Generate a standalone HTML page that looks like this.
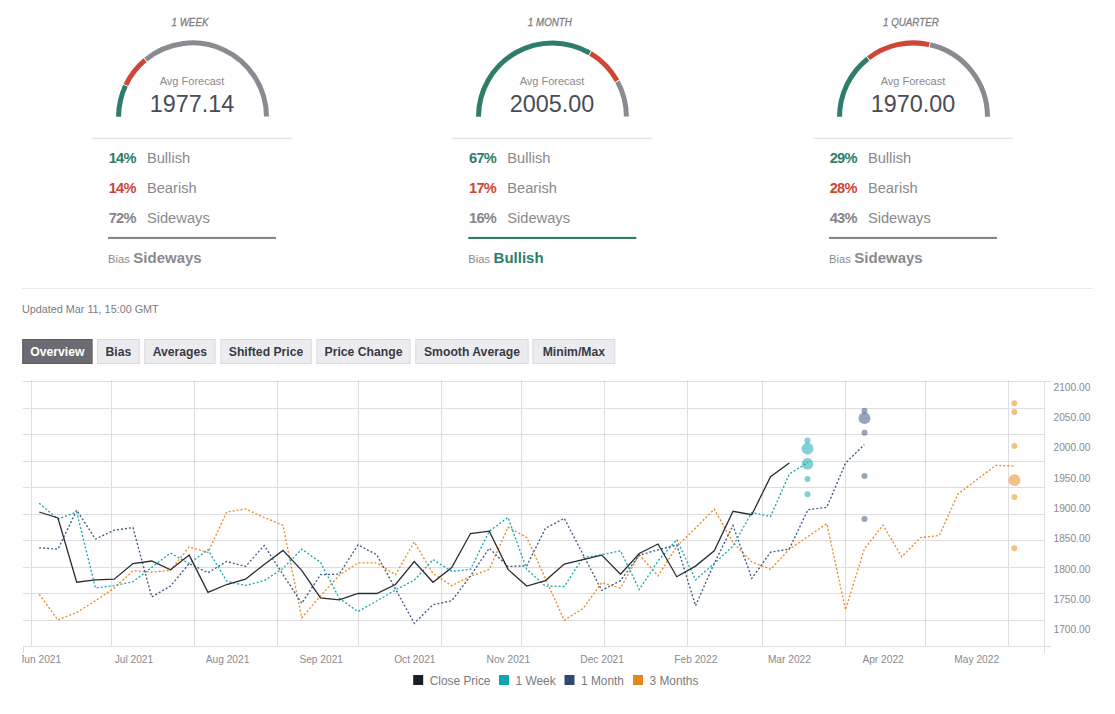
<!DOCTYPE html>
<html><head><meta charset="utf-8"><style>
html,body{margin:0;padding:0;background:#fff;}
body{width:1115px;height:714px;overflow:hidden;position:relative;font-family:"Liberation Sans", sans-serif;}
svg{position:absolute;left:0;top:0;}
text{font-family:"Liberation Sans", sans-serif;}
</style></head><body>
<svg width="1115" height="714" viewBox="0 0 1115 714">
<path d="M118.60,116.85 A73.95,73.95 0 0 1 125.45,85.77" fill="none" stroke="#2e7d6b" stroke-width="5"/>
<path d="M125.83,84.96 A73.95,73.95 0 0 1 145.07,60.16" fill="none" stroke="#cf4636" stroke-width="5"/>
<path d="M145.76,59.58 A73.95,73.95 0 0 1 266.50,116.40" fill="none" stroke="#8a8a90" stroke-width="5"/>
<text transform="translate(189.95,25.7) scale(0.89,1)" x="0" y="0" text-anchor="middle" font-size="11" font-style="italic" fill="#7e7e86" stroke="#7e7e86" stroke-width="0.3">1 WEEK</text>
<text x="192.05" y="85.3" text-anchor="middle" font-size="11" fill="#8a8a8e">Avg Forecast</text>
<text x="192.05" y="111.6" text-anchor="middle" font-size="23.4" fill="#4a4c57">1977.14</text>
<rect x="92" y="137.8" width="200" height="1" fill="#dcdcdc"/>
<text x="108.7" y="162.8" font-size="14.6" letter-spacing="-0.7" font-weight="bold" fill="#2e7d6b">14%</text>
<text x="146.9" y="162.8" font-size="14.7" fill="#8a8a8e">Bullish</text>
<text x="108.7" y="192.8" font-size="14.6" letter-spacing="-0.7" font-weight="bold" fill="#cf4636">14%</text>
<text x="146.9" y="192.8" font-size="14.7" fill="#8a8a8e">Bearish</text>
<text x="108.7" y="222.8" font-size="14.6" letter-spacing="-0.7" font-weight="bold" fill="#85858b">72%</text>
<text x="146.9" y="222.8" font-size="14.7" fill="#8a8a8e">Sideways</text>
<rect x="108" y="236.9" width="168" height="2.1" fill="#85858b"/>
<text x="108" y="262.6" font-size="11.2" fill="#8a8a8e">Bias</text>
<text x="133.3" y="262.6" font-size="15" font-weight="bold" fill="#8a8a90">Sideways</text>
<path d="M478.50,116.85 A73.95,73.95 0 0 1 589.70,52.97" fill="none" stroke="#2e7d6b" stroke-width="5"/>
<path d="M590.48,53.43 A73.95,73.95 0 0 1 617.03,80.83" fill="none" stroke="#cf4636" stroke-width="5"/>
<path d="M617.47,81.62 A73.95,73.95 0 0 1 626.40,116.40" fill="none" stroke="#8a8a90" stroke-width="5"/>
<text transform="translate(549.85,25.7) scale(0.89,1)" x="0" y="0" text-anchor="middle" font-size="11" font-style="italic" fill="#7e7e86" stroke="#7e7e86" stroke-width="0.3">1 MONTH</text>
<text x="551.95" y="85.3" text-anchor="middle" font-size="11" fill="#8a8a8e">Avg Forecast</text>
<text x="551.95" y="111.6" text-anchor="middle" font-size="23.4" fill="#4a4c57">2005.00</text>
<rect x="452" y="137.8" width="200" height="1" fill="#dcdcdc"/>
<text x="469.0" y="162.8" font-size="14.6" letter-spacing="-0.7" font-weight="bold" fill="#2e7d6b">67%</text>
<text x="507.20000000000005" y="162.8" font-size="14.7" fill="#8a8a8e">Bullish</text>
<text x="469.0" y="192.8" font-size="14.6" letter-spacing="-0.7" font-weight="bold" fill="#cf4636">17%</text>
<text x="507.20000000000005" y="192.8" font-size="14.7" fill="#8a8a8e">Bearish</text>
<text x="469.0" y="222.8" font-size="14.6" letter-spacing="-0.7" font-weight="bold" fill="#85858b">16%</text>
<text x="507.20000000000005" y="222.8" font-size="14.7" fill="#8a8a8e">Sideways</text>
<rect x="468.3" y="236.9" width="168" height="2.1" fill="#2e7d6b"/>
<text x="468.3" y="262.6" font-size="11.2" fill="#8a8a8e">Bias</text>
<text x="493.6" y="262.6" font-size="15" font-weight="bold" fill="#2e7d6b">Bullish</text>
<path d="M839.55,116.85 A73.95,73.95 0 0 1 867.82,58.70" fill="none" stroke="#2e7d6b" stroke-width="5"/>
<path d="M868.53,58.14 A73.95,73.95 0 0 1 929.19,44.58" fill="none" stroke="#cf4636" stroke-width="5"/>
<path d="M930.07,44.78 A73.95,73.95 0 0 1 987.45,116.85" fill="none" stroke="#8a8a90" stroke-width="5"/>
<text transform="translate(910.90,25.7) scale(0.89,1)" x="0" y="0" text-anchor="middle" font-size="11" font-style="italic" fill="#7e7e86" stroke="#7e7e86" stroke-width="0.3">1 QUARTER</text>
<text x="913.0" y="85.3" text-anchor="middle" font-size="11" fill="#8a8a8e">Avg Forecast</text>
<text x="913.0" y="111.6" text-anchor="middle" font-size="23.4" fill="#4a4c57">1970.00</text>
<rect x="813" y="137.8" width="200" height="1" fill="#dcdcdc"/>
<text x="829.7" y="162.8" font-size="14.6" letter-spacing="-0.7" font-weight="bold" fill="#2e7d6b">29%</text>
<text x="867.9" y="162.8" font-size="14.7" fill="#8a8a8e">Bullish</text>
<text x="829.7" y="192.8" font-size="14.6" letter-spacing="-0.7" font-weight="bold" fill="#cf4636">28%</text>
<text x="867.9" y="192.8" font-size="14.7" fill="#8a8a8e">Bearish</text>
<text x="829.7" y="222.8" font-size="14.6" letter-spacing="-0.7" font-weight="bold" fill="#85858b">43%</text>
<text x="867.9" y="222.8" font-size="14.7" fill="#8a8a8e">Sideways</text>
<rect x="829.0" y="236.9" width="168" height="2.1" fill="#85858b"/>
<text x="829.0" y="262.6" font-size="11.2" fill="#8a8a8e">Bias</text>
<text x="854.3" y="262.6" font-size="15" font-weight="bold" fill="#8a8a90">Sideways</text>
<rect x="22" y="288" width="1071" height="1" fill="#e8e8ee"/>
<text x="22" y="312.8" font-size="10.8" fill="#7b7b80">Updated Mar 11, 15:00 GMT</text>
<rect x="22.7" y="339.5" width="69.39999999999999" height="24" fill="#6c6b71" stroke="#5a5a5f" stroke-width="1"/>
<text x="57.4" y="355.9" text-anchor="middle" font-size="12.2" font-weight="bold" fill="#ffffff">Overview</text>
<rect x="97.6" y="339.5" width="41.599999999999994" height="24" fill="#ececf0" stroke="#d9d9de" stroke-width="1"/>
<text x="118.39999999999999" y="355.9" text-anchor="middle" font-size="12.2" font-weight="bold" fill="#3a3a44">Bias</text>
<rect x="144.7" y="339.5" width="70.4" height="24" fill="#ececf0" stroke="#d9d9de" stroke-width="1"/>
<text x="179.89999999999998" y="355.9" text-anchor="middle" font-size="12.2" font-weight="bold" fill="#3a3a44">Averages</text>
<rect x="220.9" y="339.5" width="90.29999999999998" height="24" fill="#ececf0" stroke="#d9d9de" stroke-width="1"/>
<text x="266.05" y="355.9" text-anchor="middle" font-size="12.2" font-weight="bold" fill="#3a3a44">Shifted Price</text>
<rect x="316.9" y="339.5" width="93.20000000000005" height="24" fill="#ececf0" stroke="#d9d9de" stroke-width="1"/>
<text x="363.5" y="355.9" text-anchor="middle" font-size="12.2" font-weight="bold" fill="#3a3a44">Price Change</text>
<rect x="415.8" y="339.5" width="112.30000000000001" height="24" fill="#ececf0" stroke="#d9d9de" stroke-width="1"/>
<text x="471.95000000000005" y="355.9" text-anchor="middle" font-size="12.2" font-weight="bold" fill="#3a3a44">Smooth Average</text>
<rect x="532.9" y="339.5" width="81.89999999999998" height="24" fill="#ececf0" stroke="#d9d9de" stroke-width="1"/>
<text x="573.8499999999999" y="355.9" text-anchor="middle" font-size="12.2" font-weight="bold" fill="#3a3a44">Minim/Max</text>
<rect x="23" y="381" width="1028" height="1" fill="#dedee1"/>
<rect x="23" y="408" width="1021" height="1" fill="#dedee1"/>
<rect x="23" y="434" width="1021" height="1" fill="#dedee1"/>
<rect x="23" y="461" width="1021" height="1" fill="#dedee1"/>
<rect x="23" y="487" width="1021" height="1" fill="#dedee1"/>
<rect x="23" y="514" width="1021" height="1" fill="#dedee1"/>
<rect x="23" y="540" width="1021" height="1" fill="#dedee1"/>
<rect x="23" y="567" width="1021" height="1" fill="#dedee1"/>
<rect x="23" y="593" width="1021" height="1" fill="#dedee1"/>
<rect x="23" y="620" width="1021" height="1" fill="#dedee1"/>
<rect x="23" y="646" width="1028" height="1" fill="#dedee1"/>
<rect x="31" y="380" width="1" height="266" fill="#dedee1"/>
<rect x="111" y="380" width="1" height="266" fill="#dedee1"/>
<rect x="194" y="380" width="1" height="266" fill="#dedee1"/>
<rect x="277" y="380" width="1" height="266" fill="#dedee1"/>
<rect x="358" y="380" width="1" height="266" fill="#dedee1"/>
<rect x="441" y="380" width="1" height="266" fill="#dedee1"/>
<rect x="521" y="380" width="1" height="266" fill="#dedee1"/>
<rect x="604" y="380" width="1" height="266" fill="#dedee1"/>
<rect x="687" y="380" width="1" height="266" fill="#dedee1"/>
<rect x="762" y="380" width="1" height="266" fill="#dedee1"/>
<rect x="845" y="380" width="1" height="266" fill="#dedee1"/>
<rect x="925" y="380" width="1" height="266" fill="#dedee1"/>
<rect x="1008" y="380" width="1" height="266" fill="#dedee1"/>
<rect x="1044" y="381" width="1" height="272" fill="#dedee1"/>
<rect x="23" y="646" width="1" height="7" fill="#dedee1"/>
<text x="1053.5" y="390.8" font-size="10.2" fill="#8a8a8e">2100.00</text>
<text x="1053.5" y="421.1" font-size="10.2" fill="#8a8a8e">2050.00</text>
<text x="1053.5" y="451.4" font-size="10.2" fill="#8a8a8e">2000.00</text>
<text x="1053.5" y="481.7" font-size="10.2" fill="#8a8a8e">1950.00</text>
<text x="1053.5" y="512.0" font-size="10.2" fill="#8a8a8e">1900.00</text>
<text x="1053.5" y="542.3" font-size="10.2" fill="#8a8a8e">1850.00</text>
<text x="1053.5" y="572.6" font-size="10.2" fill="#8a8a8e">1800.00</text>
<text x="1053.5" y="602.9" font-size="10.2" fill="#8a8a8e">1750.00</text>
<text x="1053.5" y="633.2" font-size="10.2" fill="#8a8a8e">1700.00</text>
<clipPath id="cl"><rect x="22" y="640" width="1093" height="40"/></clipPath>
<g clip-path="url(#cl)">
<text x="40.2" y="662.6" text-anchor="middle" font-size="10.2" fill="#8a8a8e">Jun 2021</text>
<text x="133.9" y="662.6" text-anchor="middle" font-size="10.2" fill="#8a8a8e">Jul 2021</text>
<text x="227.5" y="662.6" text-anchor="middle" font-size="10.2" fill="#8a8a8e">Aug 2021</text>
<text x="321.2" y="662.6" text-anchor="middle" font-size="10.2" fill="#8a8a8e">Sep 2021</text>
<text x="414.8" y="662.6" text-anchor="middle" font-size="10.2" fill="#8a8a8e">Oct 2021</text>
<text x="508.4" y="662.6" text-anchor="middle" font-size="10.2" fill="#8a8a8e">Nov 2021</text>
<text x="602.1" y="662.6" text-anchor="middle" font-size="10.2" fill="#8a8a8e">Dec 2021</text>
<text x="695.8" y="662.6" text-anchor="middle" font-size="10.2" fill="#8a8a8e">Feb 2022</text>
<text x="789.4" y="662.6" text-anchor="middle" font-size="10.2" fill="#8a8a8e">Mar 2022</text>
<text x="883.1" y="662.6" text-anchor="middle" font-size="10.2" fill="#8a8a8e">Apr 2022</text>
<text x="976.7" y="662.6" text-anchor="middle" font-size="10.2" fill="#8a8a8e">May 2022</text>
</g>
<polyline points="39.20,594.30 57.95,620.00 76.70,612.50 95.46,600.80 114.21,588.00 132.96,570.80 151.71,572.00 170.46,570.40 189.22,546.90 207.97,552.40 226.72,512.00 245.47,509.00 264.22,517.50 282.98,525.30 301.73,617.80 320.48,595.90 339.23,575.30 357.98,562.90 376.74,562.90 395.49,574.70 414.24,542.00 432.99,573.50 451.74,585.70 470.50,576.30 489.25,569.40 508.00,527.30 526.75,537.50 545.50,578.80 564.26,620.20 583.01,608.60 601.76,582.50 620.51,588.00 639.26,554.70 658.02,575.90 676.77,546.50 695.52,528.00 714.27,509.20 733.02,542.50 751.78,562.00 770.53,569.30 789.28,549.30 808.03,536.50 826.78,523.60 845.54,609.80 864.29,549.00 883.04,525.10 901.79,556.90 920.54,537.60 939.30,535.50 958.05,493.90 976.80,479.70 995.55,465.50 1014.30,465.90" fill="none" stroke="#ea8c25" stroke-width="1.35" stroke-dasharray="2,2"/>
<polyline points="39.20,547.80 57.95,549.20 76.70,510.20 95.46,539.00 114.21,530.20 132.96,527.60 151.71,596.90 170.46,586.10 189.22,563.50 207.97,572.70 226.72,561.40 245.47,566.50 264.22,545.50 282.98,574.50 301.73,603.30 320.48,574.70 339.23,574.10 357.98,544.90 376.74,554.70 395.49,589.00 414.24,623.30 432.99,604.70 451.74,600.80 470.50,576.00 489.25,548.20 508.00,566.50 526.75,565.80 545.50,528.20 564.26,518.40 583.01,554.40 601.76,590.40 620.51,580.60 639.26,555.20 658.02,549.80 676.77,544.90 695.52,605.70 714.27,563.30 733.02,525.40 751.78,578.40 770.53,552.20 789.28,549.00 808.03,509.60 826.78,507.30 845.54,463.10 864.29,444.70" fill="none" stroke="#3f5b80" stroke-width="1.35" stroke-dasharray="2,2"/>
<polyline points="39.20,503.30 57.95,519.00 76.70,512.00 95.46,588.00 114.21,585.70 132.96,581.70 151.71,567.40 170.46,553.10 189.22,563.50 207.97,549.80 226.72,581.20 245.47,585.50 264.22,580.60 282.98,568.40 301.73,549.20 320.48,562.20 339.23,598.30 357.98,611.60 376.74,601.00 395.49,590.00 414.24,580.20 432.99,559.60 451.74,571.40 470.50,569.40 489.25,531.20 508.00,517.50 526.75,569.40 545.50,586.10 564.26,586.50 583.01,557.60 601.76,554.70 620.51,550.80 639.26,589.50 658.02,561.00 676.77,539.50 695.52,579.80 714.27,563.50 733.02,546.00 751.78,512.50 770.53,516.50 789.28,474.10 808.03,462.40" fill="none" stroke="#1aa9b3" stroke-width="1.35" stroke-dasharray="2,2"/>
<polyline points="39.20,512.00 57.95,518.00 76.70,582.20 95.46,579.80 114.21,579.20 132.96,563.50 151.71,561.00 170.46,569.80 189.22,555.10 207.97,592.40 226.72,584.50 245.47,579.20 264.22,564.50 282.98,550.40 301.73,570.40 320.48,597.80 339.23,599.80 357.98,593.50 376.74,593.50 395.49,584.50 414.24,561.60 432.99,582.30 451.74,567.50 470.50,533.50 489.25,531.20 508.00,569.40 526.75,586.10 545.50,580.60 564.26,564.10 583.01,559.60 601.76,555.10 620.51,574.30 639.26,553.50 658.02,544.00 676.77,576.70 695.52,566.10 714.27,550.80 733.02,511.30 751.78,514.70 770.53,476.70 789.28,462.90" fill="none" stroke="#2a2c34" stroke-width="1.3"/>
<circle cx="807.5" cy="440.6" r="3" fill="#1aa9b3" fill-opacity="0.55"/>
<circle cx="807.5" cy="448.6" r="5.9" fill="#1aa9b3" fill-opacity="0.55"/>
<circle cx="807.5" cy="463.8" r="5.8" fill="#1aa9b3" fill-opacity="0.55"/>
<circle cx="807.5" cy="479.0" r="3" fill="#1aa9b3" fill-opacity="0.55"/>
<circle cx="807.5" cy="494.2" r="3" fill="#1aa9b3" fill-opacity="0.55"/>
<circle cx="864.5" cy="410.8" r="3" fill="#3f5b80" fill-opacity="0.55"/>
<circle cx="864.5" cy="418.2" r="5.9" fill="#3f5b80" fill-opacity="0.55"/>
<circle cx="864.5" cy="432.7" r="3" fill="#3f5b80" fill-opacity="0.55"/>
<circle cx="864.5" cy="475.9" r="3" fill="#3f5b80" fill-opacity="0.55"/>
<circle cx="864.5" cy="519.0" r="3" fill="#3f5b80" fill-opacity="0.55"/>
<circle cx="1014.4" cy="403.3" r="3" fill="#ea8c25" fill-opacity="0.55"/>
<circle cx="1014.4" cy="412.0" r="3" fill="#ea8c25" fill-opacity="0.55"/>
<circle cx="1014.4" cy="446.1" r="3" fill="#ea8c25" fill-opacity="0.55"/>
<circle cx="1014.4" cy="480.2" r="5.9" fill="#ea8c25" fill-opacity="0.55"/>
<circle cx="1014.4" cy="497.0" r="3" fill="#ea8c25" fill-opacity="0.55"/>
<circle cx="1014.4" cy="548.2" r="3" fill="#ea8c25" fill-opacity="0.55"/>
<rect x="413.2" y="675" width="10" height="10" fill="#1c1d25"/>
<text x="429.7" y="685" font-size="11.9" fill="#7a7a80">Close Price</text>
<rect x="499.0" y="675" width="10" height="10" fill="#12a5ac"/>
<text x="515.5" y="685" font-size="11.9" fill="#7a7a80">1 Week</text>
<rect x="564.5" y="675" width="10" height="10" fill="#2c4a6e"/>
<text x="581.0" y="685" font-size="11.9" fill="#7a7a80">1 Month</text>
<rect x="633.0" y="675" width="10" height="10" fill="#e6871e"/>
<text x="649.5" y="685" font-size="11.9" fill="#7a7a80">3 Months</text>
</svg>
</body></html>
